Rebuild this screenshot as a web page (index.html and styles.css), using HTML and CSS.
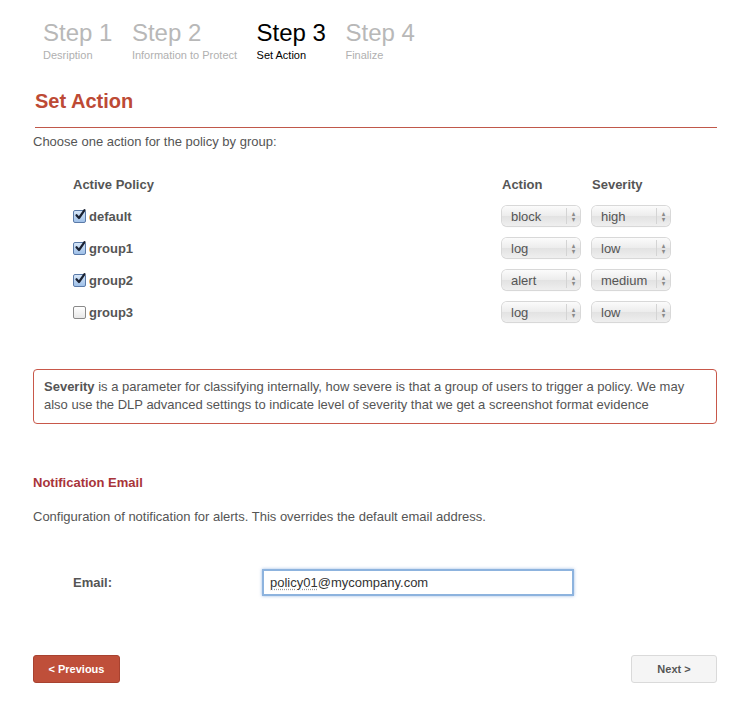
FILE: index.html
```html
<!DOCTYPE html>
<html>
<head>
<meta charset="utf-8">
<link rel="stylesheet" href="styles.css">
</head>
<body>
<div class="page">
  <div class="steps">
    <div class="step"><div class="step-num">Step 1</div><div class="step-sub">Desription</div></div>
    <div class="step"><div class="step-num">Step 2</div><div class="step-sub">Information to Protect</div></div>
    <div class="step active"><div class="step-num">Step 3</div><div class="step-sub">Set Action</div></div>
    <div class="step"><div class="step-num">Step 4</div><div class="step-sub">Finalize</div></div>
  </div>

  <h1 class="title">Set Action</h1>
  <p class="intro">Choose one action for the policy by group:</p>

  <div class="policy-grid">
    <div class="th">Active Policy</div>
    <div class="th">Action</div>
    <div class="th">Severity</div>

    <div class="cell"><span class="cb checked"><svg viewBox="0 0 12 12" width="12" height="12"><path d="M2.5 6.2 L5 9 L10.5 1.2" fill="none" stroke="#1a2233" stroke-width="2.2" stroke-linecap="round" stroke-linejoin="round"/></svg></span><b>default</b></div>
    <div class="cell"><span class="sel"><span class="sel-val">block</span><span class="sel-arr"><i>&#9650;</i><i>&#9660;</i></span></span></div>
    <div class="cell"><span class="sel"><span class="sel-val">high</span><span class="sel-arr"><i>&#9650;</i><i>&#9660;</i></span></span></div>

    <div class="cell"><span class="cb checked"><svg viewBox="0 0 12 12" width="12" height="12"><path d="M2.5 6.2 L5 9 L10.5 1.2" fill="none" stroke="#1a2233" stroke-width="2.2" stroke-linecap="round" stroke-linejoin="round"/></svg></span><b>group1</b></div>
    <div class="cell"><span class="sel"><span class="sel-val">log</span><span class="sel-arr"><i>&#9650;</i><i>&#9660;</i></span></span></div>
    <div class="cell"><span class="sel"><span class="sel-val">low</span><span class="sel-arr"><i>&#9650;</i><i>&#9660;</i></span></span></div>

    <div class="cell"><span class="cb checked"><svg viewBox="0 0 12 12" width="12" height="12"><path d="M2.5 6.2 L5 9 L10.5 1.2" fill="none" stroke="#1a2233" stroke-width="2.2" stroke-linecap="round" stroke-linejoin="round"/></svg></span><b>group2</b></div>
    <div class="cell"><span class="sel"><span class="sel-val">alert</span><span class="sel-arr"><i>&#9650;</i><i>&#9660;</i></span></span></div>
    <div class="cell"><span class="sel"><span class="sel-val">medium</span><span class="sel-arr"><i>&#9650;</i><i>&#9660;</i></span></span></div>

    <div class="cell"><span class="cb"></span><b>group3</b></div>
    <div class="cell"><span class="sel"><span class="sel-val">log</span><span class="sel-arr"><i>&#9650;</i><i>&#9660;</i></span></span></div>
    <div class="cell"><span class="sel"><span class="sel-val">low</span><span class="sel-arr"><i>&#9650;</i><i>&#9660;</i></span></span></div>
  </div>

  <div class="notice"><b>Severity</b> is a parameter for classifying internally, how severe is that a group of users to trigger a policy. We may also use the DLP advanced settings to indicate level of severity that we get a screenshot format evidence</div>

  <h2 class="subtitle">Notification Email</h2>
  <p class="desc">Configuration of notification for alerts. This overrides the default email address.</p>

  <div class="email-row">
    <label class="email-label">Email:</label>
    <div class="email-input"><span class="spell">policy01</span>@mycompany.com</div>
  </div>

  <div class="buttons">
    <span class="btn btn-prev">&lt; Previous</span>
    <span class="btn btn-next">Next &gt;</span>
  </div>
</div>
</body>
</html>
```

FILE: styles.css
```css
html, body {
  margin: 0;
  padding: 0;
  background: #fff;
}
body {
  font-family: "Liberation Sans", Arial, sans-serif;
  color: #555;
  font-size: 13px;
}
.page {
  width: 684px;
  padding-left: 33px;
}
.steps {
  display: flex;
  gap: 19.5px;
  padding-left: 10px;
  padding-top: 19px;
}
.step-num {
  font-size: 24px;
  line-height: 28px;
  color: #b8b8b8;
}
.step-sub {
  font-size: 11px;
  line-height: 14px;
  color: #b0b0b0;
  margin-top: 1px;
}
.step.active .step-num,
.step.active .step-sub {
  color: #000;
}
.title {
  margin: 27px 0 0 2px;
  font-size: 20px;
  line-height: 24px;
  color: #bd4a35;
  font-weight: bold;
  padding-bottom: 14px;
  border-bottom: 1px solid #c0584a;
}
.intro {
  margin: 6px 0 0 0;
  line-height: 16px;
}
.policy-grid {
  display: grid;
  grid-template-columns: 429px 90px 90px;
  grid-auto-rows: 32px;
  margin: 18px 0 0 40px;
}
.th {
  font-weight: bold;
  display: flex;
  align-items: center;
}
.cell {
  display: flex;
  align-items: center;
}
.cell b {
  font-weight: bold;
  color: #555;
}
.cb {
  width: 11px;
  height: 11px;
  border: 1px solid #8a8a8a;
  border-radius: 2px;
  background: linear-gradient(#fff, #e8e8e8);
  margin-right: 3px;
  margin-left: 0;
  position: relative;
  box-sizing: content-box;
}
.cb.checked {
  border-color: #5a7aa8;
  background: linear-gradient(#d6e6f8, #9fc0e8);
}
.cb svg {
  position: absolute;
  left: 0;
  top: -2px;
}
.sel {
  display: flex;
  width: 78px;
  height: 20px;
  box-sizing: border-box;
  border-radius: 5px;
  background: linear-gradient(#fbfbfb, #ececec 50%, #e2e2e2 51%, #efefef);
  box-shadow: 0 0 0 1px #d8d8d8, 0 1px 1px rgba(0,0,0,0.12);
  align-items: center;
}
.sel-val {
  flex: 1;
  padding-left: 9px;
  font-size: 13px;
  color: #555;
}
.sel-arr {
  width: 13px;
  height: 16px;
  border-left: 1px solid #d4d4d4;
  display: flex;
  flex-direction: column;
  align-items: center;
  justify-content: center;
  gap: 1px;
  color: #8a8a8a;
}
.sel-arr i {
  font-style: normal;
  font-size: 7px;
  line-height: 5px;
  display: block;
  transform: scaleX(0.8);
}
.notice {
  margin-top: 41px;
  border: 1px solid #c8584a;
  border-radius: 4px;
  padding: 8px 10px 9px;
  line-height: 18px;
  font-size: 13px;
  color: #555;
}
.subtitle {
  margin: 51px 0 0 0;
  font-size: 13px;
  line-height: 16px;
  color: #a8343a;
  font-weight: bold;
}
.desc {
  margin: 18px 0 0 0;
  line-height: 16px;
}
.email-row {
  display: flex;
  align-items: center;
  margin-top: 44px;
  padding-left: 40px;
}
.email-label {
  width: 189px;
  font-weight: bold;
  color: #555;
}
.email-input {
  width: 312px;
  height: 27px;
  box-sizing: border-box;
  border: 2px solid #8db3de;
  box-shadow: 0 0 3px rgba(90,140,210,0.6);
  padding: 0 6px;
  display: flex;
  align-items: center;
  font-size: 13px;
  color: #333;
  background: #fff;
}
.spell {
  text-decoration: underline dotted #999;
  text-underline-offset: 2px;
}
.buttons {
  display: flex;
  justify-content: space-between;
  margin-top: 59px;
}
.btn {
  width: 87px;
  height: 28px;
  box-sizing: border-box;
  border-radius: 3px;
  display: flex;
  align-items: center;
  justify-content: center;
  font-size: 11px;
  font-weight: bold;
}
.btn-prev {
  background: #bf4f3a;
  color: #fff;
  border: 1px solid #a84230;
}
.btn-next {
  width: 86px;
  background: #f5f5f5;
  color: #555;
  border: 1px solid #dadada;
}
```
